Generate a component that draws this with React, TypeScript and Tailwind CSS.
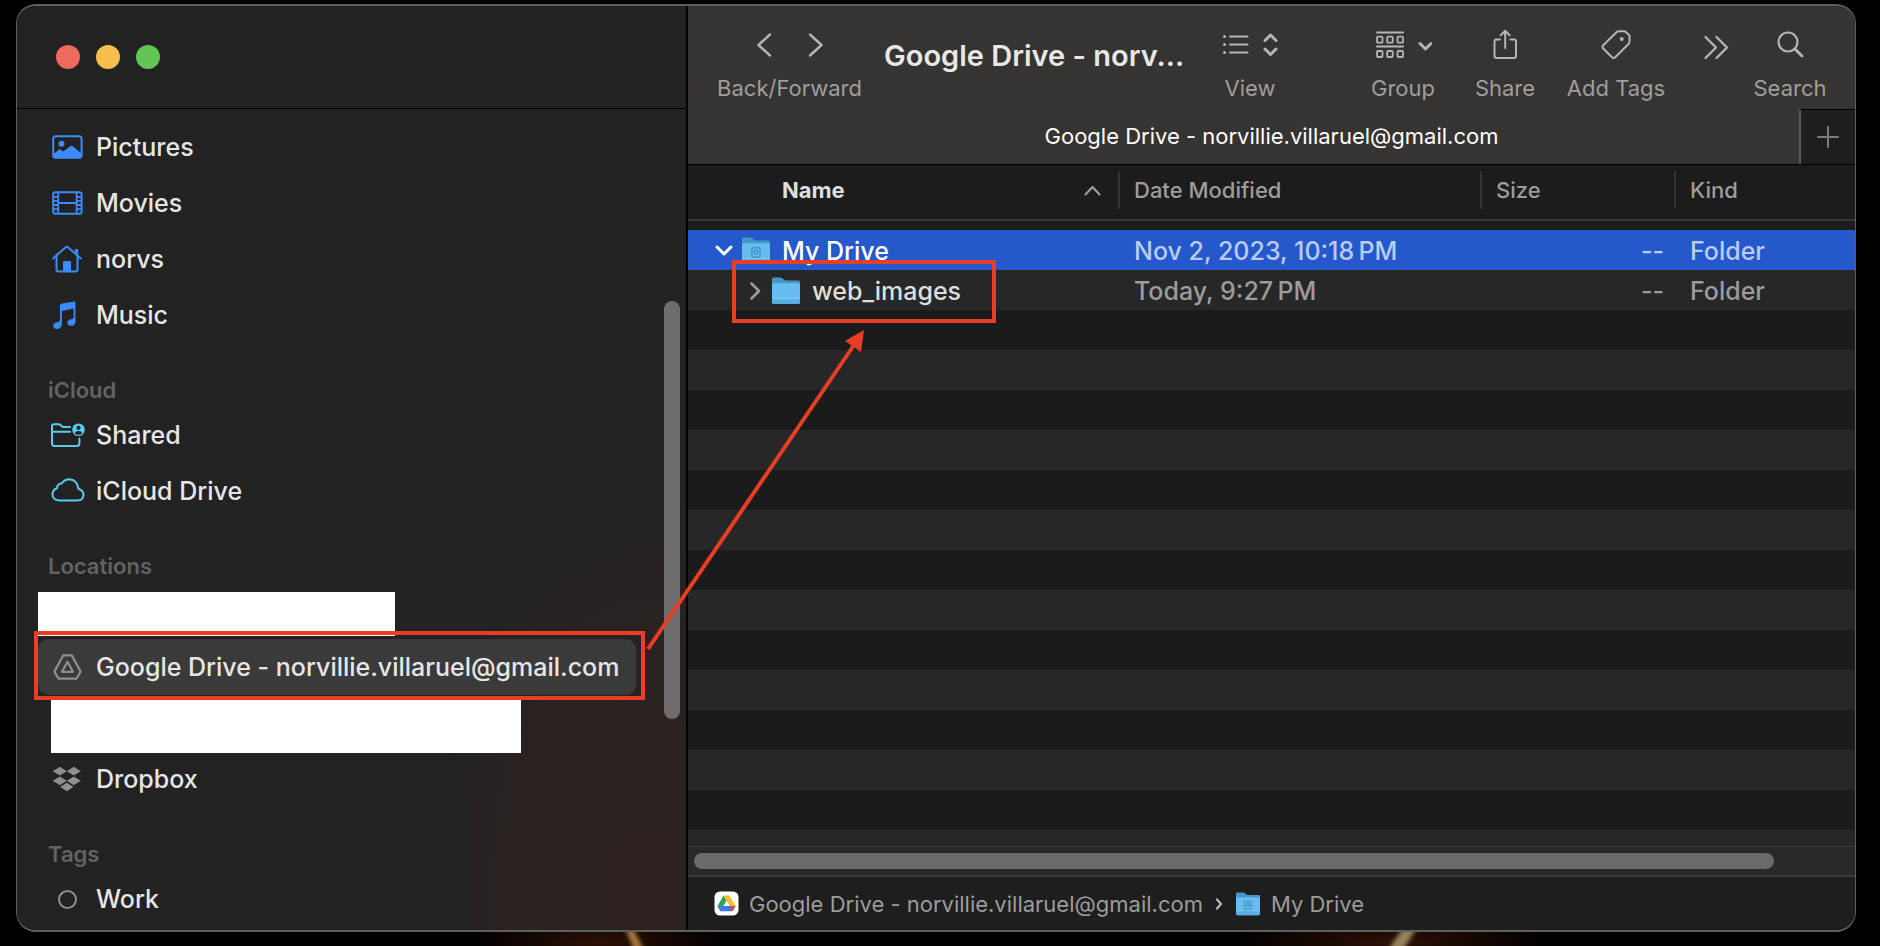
import React from "react";

const rowStripes = Array.from({ length: 14 });

function SideRow({ icon, label, active }: { icon: React.ReactNode; label: string; active?: boolean }) {
  return (
    <li className="h-14">
      <a
        href="#"
        aria-current={active ? "page" : undefined}
        className={`flex h-full items-center rounded-[10px] pl-[14px] ${active ? "bg-[#3b3a3a]" : ""}`}
      >
        <span className="flex w-11 shrink-0 items-center">{icon}</span>
        <span className="whitespace-nowrap">{label}</span>
      </a>
    </li>
  );
}

function SideHeading({ children }: { children: React.ReactNode }) {
  return (
    <h2 className="flex h-16 items-end pb-[3px] pl-[10px] text-[22px] leading-7 font-semibold text-[#636363]">{children}</h2>
  );
}

const blue = "#3b8bff";
const cyan = "#5bcbe8";

const PicturesIcon = () => (
  <svg width="31" height="26" viewBox="0 0 31 26" fill="none">
    <rect x="1.2" y="2.2" width="28.4" height="21.6" rx="2.5" stroke={blue} strokeWidth="2" />
    <circle cx="9.5" cy="9.8" r="3" fill={blue} />
    <path d="M1.5 20 7 15.400Q7.800 14.800 8.600 15.400L11 17.600 18.600 12Q19.600 11.300 20.600 12L29.500 19.600V22Q29 24 27 24H4Q2 24 1.5 22Z" fill={blue} />
  </svg>
);
const MoviesIcon = () => (
  <svg width="31" height="26" viewBox="0 0 31 26" fill="none" stroke={blue}>
    <rect x="1.2" y="2.2" width="28.4" height="21.6" rx="2" strokeWidth="2" />
    <path d="M6.2 3V23M24.600 3V23M6.5 13H24.3" strokeWidth="1.800" />
    <path d="M1 6.8H6M1 10.8H6M1 15H6M1 19.2H6M25 6.8H30M25 10.8H30M25 15H30M25 19.2H30" strokeWidth="1.800" />
  </svg>
);
const HomeIcon = () => (
  <svg width="31" height="28" viewBox="0 0 31 28" fill="none" stroke={blue} strokeWidth="2" strokeLinecap="round" strokeLinejoin="round">
    <path d="M1 13.400 14 2Q14.800 1.300 15.600 2L28.800 13.400" />
    <path d="M4.500 11V24.5Q4.500 26.5 6.500 26.5H23.500Q25.500 26.5 25.500 24.5V11" />
    <path d="M24.5 9.5V4" strokeWidth="3.4" strokeLinecap="butt" />
    <path d="M12 26V17H18V26Z" fill={blue} />
  </svg>
);
const MusicIcon = () => (
  <svg width="28" height="28" viewBox="0 0 28 28" fill={blue}>
    <path d="M8 4.200Q8 3 9.200 2.800L22 .4Q23.400.2 23.400 1.600V20Q23.400 24.600 19.200 24.800Q15.400 24.800 15.400 21.600Q15.600 18.900 19 18.300Q21.600 17.800 21.600 16.400V7.600L9.900 9.900V22.600Q9.900 27.600 5.200 28Q1.200 28 1.200 24.600Q1.600 21.800 5 21.200Q8 20.700 8 19.200Z" />
  </svg>
);
const SharedIcon = () => (
  <svg width="35" height="26" viewBox="0 0 35 26" fill="none" stroke={cyan} strokeWidth="2" strokeLinecap="round" className="-ml-px">
    <path d="M19 5H12.5Q11.5 5 10.5 4L9.8 3.3Q8.8 2.2 7.4 2.2H3Q1 2.2 1 4.2V21.6Q1 24 3.4 24H26Q28.4 24 28.4 21.6V16.5" />
    <path d="M1.5 9.8H19" />
    <circle cx="27.5" cy="7.8" r="6.3" fill={cyan} stroke="none" />
    <circle cx="27.5" cy="5.8" r="2.1" fill="#222" stroke="none" />
    <path d="M23.5 11.2Q25 8.9 27.5 8.9T31.5 11.2Q29.8 12.8 27.5 12.8T23.5 11.2Z" fill="#222" stroke="none" />
  </svg>
);
const CloudIcon = () => (
  <svg width="34" height="26" viewBox="0 0 34 26" fill="none" stroke={cyan} strokeWidth="2" className="-ml-px">
    <path d="M8 22.500Q1.500 22 1.500 16.500Q1.500 11.800 6 10.300Q6.200 6 10.500 5.600Q13.500 1.200 18.500 1.200Q26.500 2 27.400 10.700Q32.500 12.500 32.500 17Q32 22.500 26.500 22.500Z" strokeLinejoin="round" />
  </svg>
);
const DriveGlyph = () => (
  <svg width="31" height="28" viewBox="0 0 31 28" fill="none" stroke="#8f8f8f" strokeWidth="2.2" strokeLinejoin="round">
    <path d="M11.3 2.3H19.7L28.6 18.6 24.4 25.7H6.6L2.4 18.6Z" />
    <path d="M15.5 8.8 21 18.8H10Z" />
  </svg>
);
const DropboxGlyph = () => (
  <svg width="30" height="26" viewBox="0 0 30 26" fill="#8f8f8f">
    <path d="M7.8.8 14.8 5.2 7.8 9.6.8 5.2ZM21.8.8 28.8 5.2 21.8 9.6 14.8 5.2ZM7.8 10.4 14.8 14.8 7.8 19.2.8 14.8ZM21.8 10.4 28.8 14.8 21.8 19.2 14.8 14.8ZM14.8 16.8 21.4 20.9 14.8 25.2 8.2 20.9Z" />
  </svg>
);

function Folder({ badge, small }: { badge?: boolean; small?: boolean }) {
  return (
    <svg width={small ? 26 : 30} height={small ? 24 : 28} viewBox="0 0 30 28" aria-hidden="true">
      <path d="M1 2.2Q1 .6 2.8.6H9.4Q10.6.6 11.4 1.4L12.8 2.6Q13.6 3.4 14.8 3.4H27.2Q29 3.4 29 5V12H1Z" fill="#4597c8" />
      <path d="M1 7.6Q1 6.2 2.6 6.2H27.4Q29 6.2 29 7.6V25Q29 27 27 27H3Q1 27 1 25Z" fill="#68bdf0" />
      <path d="M1 22V25Q1 27 3 27H27Q29 27 29 25V22Z" fill="#57afe4" />
      <path d="M1 21.5H29" stroke="#8acdf5" strokeWidth=".8" />
      {badge && (
        <g fill="none" stroke="#3d8fc0" strokeWidth="1.3">
          <rect x="11" y="10.8" width="8" height="9.4" rx="1.2" />
          <circle cx="15" cy="15.2" r="1.8" />
        </g>
      )}
    </svg>
  );
}

function Tool({ label, className, children }: { label: string; className: string; children: React.ReactNode }) {
  return (
    <button type="button" className={`flex flex-col items-center ${className}`}>
      <span className="flex h-[34px] items-center justify-center">{children}</span>
      <span className="mt-3 text-[22px] leading-7 whitespace-nowrap">{label}</span>
    </button>
  );
}

const line = { fill: "none", stroke: "#b5b5b4", strokeLinecap: "round", strokeLinejoin: "round" } as const;

export default function App() {
  return (
    <div
      className="relative min-h-screen bg-black pt-1 pr-6 pb-[14px] pl-4 text-[#e6e6e6]"
      style={{ fontFamily: 'Inter, "Liberation Sans", sans-serif' }}
    >
      <svg className="absolute bottom-0 left-0 h-[14px] w-full" viewBox="0 0 1880 14" preserveAspectRatio="none" aria-hidden="true">
        <defs>
          <radialGradient id="glow">
            <stop offset="0" stopColor="#2c1006" />
            <stop offset="1" stopColor="#000" />
          </radialGradient>
          <filter id="soft" x="-50%" y="-50%" width="200%" height="200%">
            <feGaussianBlur stdDeviation="2" />
          </filter>
        </defs>
        <ellipse cx="600" cy="10" rx="130" ry="30" fill="url(#glow)" />
        <ellipse cx="1390" cy="10" rx="160" ry="30" fill="url(#glow)" />
        <path d="M625 -4H633L644 18H634Z" fill="#a8743c" filter="url(#soft)" />
        <path d="M1403 -4H1417L1403 18H1388Z" fill="#94805a" filter="url(#soft)" />
      </svg>

      <div className="relative flex h-[calc(100vh-18px)] min-h-[900px] overflow-hidden rounded-[20px] border border-t-2 border-b-2 border-[#5f5f5f] bg-[#1c1c1c]">
        <aside className="flex w-[671px] shrink-0 flex-col border-r-2 border-black bg-[#222] bg-[radial-gradient(ellipse_220px_420px_at_94%_96%,#2e2221_0%,#292221_60%,#222222_100%)]">
          <div className="flex h-[103px] shrink-0 items-center gap-4 border-b border-black pb-px pl-[39px]">
            <button type="button" aria-label="Close" className="size-6 rounded-full bg-[#ed6a5e]" />
            <button type="button" aria-label="Minimize" className="size-6 rounded-full bg-[#f5bf4f]" />
            <button type="button" aria-label="Zoom" className="size-6 rounded-full bg-[#61c554]" />
          </div>
          <div className="flex min-h-0 grow">
            <nav className="w-[619px] pt-[10px] pl-[21px] text-[25px] leading-8 font-medium">
              <ul>
                <SideRow icon={<PicturesIcon />} label="Pictures" />
                <SideRow icon={<MoviesIcon />} label="Movies" />
                <SideRow icon={<HomeIcon />} label="norvs" />
                <SideRow icon={<MusicIcon />} label="Music" />
              </ul>
              <SideHeading>iCloud</SideHeading>
              <ul>
                <SideRow icon={<SharedIcon />} label="Shared" />
                <SideRow icon={<CloudIcon />} label="iCloud Drive" />
              </ul>
              <SideHeading>Locations</SideHeading>
              <ul>
                <li className="h-14 pt-[9px]">
                  <div className="h-11 w-[357px] bg-white" />
                </li>
                <SideRow active icon={<DriveGlyph />} label="Google Drive - norvillie.villaruel@gmail.com" />
                <li className="flex h-14 pt-1 pl-[13px]">
                  <div className="h-[54px] w-[470px] bg-white" />
                </li>
                <SideRow icon={<DropboxGlyph />} label="Dropbox" />
              </ul>
              <SideHeading>Tags</SideHeading>
              <ul>
                <SideRow icon={<span className="ml-[6px] size-[19px] rounded-full border-2 border-[#8f8f8f]" />} label="Work" />
              </ul>
            </nav>
            <div className="ml-auto pt-[192px] pr-[6px]">
              <div className="h-[418px] w-4 rounded-full bg-[#6e6c6c]" />
            </div>
          </div>
        </aside>

        <main className="flex min-w-0 grow flex-col">
          <header className="flex h-[103px] shrink-0 items-start bg-[#353432] pt-[22px] text-[#9f9e9d]">
            <div className="ml-[30px] flex w-[143px] flex-col items-center">
              <div className="flex h-[34px] items-center gap-9">
                <button type="button" aria-label="Back">
                  <svg width="15" height="24" viewBox="0 0 15 24" {...line} strokeWidth="2.4"><path d="M13 1.5 1.500 12 13 22.5" /></svg>
                </button>
                <button type="button" aria-label="Forward">
                  <svg width="15" height="24" viewBox="0 0 15 24" {...line} strokeWidth="2.4"><path d="M2 1.5 13.500 12 2 22.5" /></svg>
                </button>
              </div>
              <span className="mt-3 text-[22px] leading-7 whitespace-nowrap">Back/Forward</span>
            </div>
            <h1 className="mt-2 ml-[23px] text-[29px] leading-10 font-semibold whitespace-nowrap text-[#e8e8e7]">
              Google Drive - norv...
            </h1>
            <Tool label="View" className="ml-auto w-[60px]">
              <svg width="58" height="28" viewBox="0 0 58 28" {...line} strokeWidth="2">
                <path d="M9 5.5H26.500M9 13.500H26.500M9 21.5H26.500" />
                <path d="M3.500 5.5h.1M3.500 13.500h.1M3.500 21.5h.1" strokeWidth="3" />
                <path d="M44 9.500 49.5 4 55 9.500M44 18 49.5 23.500 55 18" strokeWidth="3" />
              </svg>
            </Tool>
            <Tool label="Group" className="ml-[91px] w-16">
              <svg width="58" height="30" viewBox="0 0 58 30" {...line} strokeWidth="2">
                <path d="M3 2.500H29M3 16.500H29" />
                <g strokeWidth="1.8">
                  <rect x="3" y="6.700" width="5.500" height="6" rx="1" />
                  <rect x="13.200" y="6.700" width="5.500" height="6" rx="1" />
                  <rect x="23.500" y="6.700" width="5.500" height="6" rx="1" />
                  <rect x="3" y="21" width="5.500" height="6" rx="1" />
                  <rect x="13.200" y="21" width="5.500" height="6" rx="1" />
                  <rect x="23.500" y="21" width="5.500" height="6" rx="1" />
                </g>
                <path d="M46 13.500 51.500 19 57 13.500" strokeWidth="3" />
              </svg>
            </Tool>
            <Tool label="Share" className="ml-10 w-[60px]">
              <svg width="26" height="32" viewBox="0 0 26 32" {...line} strokeWidth="2">
                <path d="M8 10.500H4.500Q2.500 10.500 2.500 12.500V27Q2.500 29 4.500 29H22Q24 29 24 27V12.500Q24 10.500 22 10.500H18.500M13.200 19V2M8.700 6.200 13.200 1.800 17.700 6.200" />
              </svg>
            </Tool>
            <Tool label="Add Tags" className="ml-8 w-[98px]">
              <svg width="30" height="32" viewBox="0 0 30 32" {...line} strokeWidth="2">
                <path d="M15.500 3.300Q16.500 2.300 18 2.300H24L28.500 6.500V12.500Q28.500 14 27.500 15L14.500 28Q12.800 29.800 11 28.200L2.200 19.500Q.8 17.800 2.200 16.200Z" />
                <circle cx="20.700" cy="10" r="1" fill="#b5b5b4" />
              </svg>
            </Tool>
            <button type="button" aria-label="More" className="ml-[38px] flex h-[38px] items-center">
              <svg width="26" height="26" viewBox="0 0 26 26" {...line} strokeWidth="2.300"><path d="M2.500 3 13 13.500 2.500 24M13.500 3 24 13.500 13.500 24" /></svg>
            </button>
            <Tool label="Search" className="mr-[29px] ml-[25px] w-[72px]">
              <svg width="28" height="30" viewBox="0 0 28 30" {...line} strokeWidth="2.200"><circle cx="12" cy="12" r="9.500" /><path d="M19 19 26 26" strokeWidth="2.800" /></svg>
            </Tool>
          </header>

          <div className="flex h-14 shrink-0 border-b border-black bg-[#353432]">
            <div className="flex grow items-center justify-center pb-px pl-14 text-[22px] leading-7 text-white">
              Google Drive - norvillie.villaruel@gmail.com
            </div>
            <button type="button" aria-label="New tab" className="flex w-14 items-center justify-center border-t border-l-2 border-t-black border-l-[#5a5a58] bg-[#1f1e1d]">
              <svg width="22" height="22" viewBox="0 0 22 22" {...line} stroke="#7b7b7a" strokeWidth="2"><path d="M11 1V21M1 11H21" /></svg>
            </button>
          </div>

          <div className="min-h-0 grow overflow-hidden">
            <table className="w-full table-fixed border-collapse text-left whitespace-nowrap">
              <colgroup>
                <col className="w-[432px]" />
                <col className="w-[362px]" />
                <col className="w-[194px]" />
                <col />
              </colgroup>
              <thead className="text-[22px] leading-7 text-[#9c9c9c]">
                <tr className="h-[55px] border-b-2 border-[#363636]">
                  <th scope="col" className="p-0 font-bold text-[#dedede]">
                    <div className="mb-1 flex h-[38px] items-center justify-between border-r-2 border-[#343434] pr-[17px] pl-[94px]">
                      Name
                      <svg width="17" height="11" viewBox="0 0 17 11" {...line} stroke="#a0a0a0" strokeWidth="2"><path d="M1.500 9.500 8.500 2 15.500 9.500" /></svg>
                    </div>
                  </th>
                  <th scope="col" className="p-0 font-medium">
                    <div className="mb-1 flex h-[38px] items-center border-r-2 border-[#343434] pl-[14px]">Date Modified</div>
                  </th>
                  <th scope="col" className="p-0 font-medium">
                    <div className="mb-1 flex h-[38px] items-center border-r-2 border-[#343434] pl-[14px]">Size</div>
                  </th>
                  <th scope="col" className="p-0 font-medium">
                    <div className="mb-1 flex h-[38px] items-center pl-[14px]">Kind</div>
                  </th>
                </tr>
              </thead>
              <tbody className="text-[25px] leading-8 font-medium text-[#9c9c9c]">
                <tr className="h-[10px]" aria-hidden="true"><td colSpan={4} className="p-0" /></tr>
                <tr className="h-10 bg-[#2458cb] text-[#bccbf0]">
                  <td className="p-0 pt-[2px]">
                    <div className="flex items-center pl-[27px] text-white">
                      <svg width="18" height="14" viewBox="0 0 18 14" {...line} stroke="#fff" strokeWidth="3"><path d="M2 3 9 10 16 3" /></svg>
                      <span className="ml-2 flex w-[41px]"><Folder badge /></span>
                      My Drive
                    </div>
                  </td>
                  <td className="p-0 pt-[2px] pl-[14px]">Nov 2, 2023, 10:18{"\u2009"}PM</td>
                  <td className="p-0 pt-[2px] pr-3 text-right">--</td>
                  <td className="p-0 pt-[2px] pl-[14px]">Folder</td>
                </tr>
                <tr className="h-10 bg-[#272727]">
                  <td className="p-0 pt-[2px]">
                    <div className="flex items-center pl-[61px] text-[#dedede]">
                      <svg width="14" height="18" viewBox="0 0 14 18" {...line} stroke="#9c9c9c" strokeWidth="2.600"><path d="M2.500 1.500 10 9 2.500 16.500" /></svg>
                      <span className="ml-2 flex w-[41px]"><Folder /></span>
                      web_images
                    </div>
                  </td>
                  <td className="p-0 pt-[2px] pl-[14px]">Today, 9:27{"\u2009"}PM</td>
                  <td className="p-0 pt-[2px] pr-3 text-right">--</td>
                  <td className="p-0 pt-[2px] pl-[14px]">Folder</td>
                </tr>
                {rowStripes.map((_, i) => (
                  <tr key={i} aria-hidden="true" className="h-10 odd:bg-[#272727] even:bg-[#1b1b1b]">
                    <td colSpan={4} className="p-0" />
                  </tr>
                ))}
              </tbody>
            </table>
          </div>

          <div className="flex h-[31px] shrink-0 items-center border-t border-b-2 border-[#3b3b3b] bg-[#292929] pl-[6px]">
            <div className="h-4 w-[93%] rounded-full bg-[#6a6a6a]" />
          </div>

          <footer className="flex h-[53px] shrink-0 items-center bg-[#1e1e1e] pl-[26px] text-[22px] leading-7 text-[#9c9c9c]">
            <svg width="25" height="25" viewBox="0 0 25 25" aria-hidden="true">
              <rect x=".5" y=".5" width="24" height="24" rx="5.500" fill="#fff" />
              <path d="M9.500 4.500 12.500 9.700 6.500 20.200 3.500 15Z" fill="#2fa35a" />
              <path d="M9.500 4.500H15.500L21.500 15H15.500Z" fill="#fbbc2c" />
              <path d="M3.500 15H21.500L18.500 20.200H6.500Z" fill="#3c78e8" />
              <path d="M15.500 15H21.500L18.500 20.200Z" fill="#e3483a" />
              <path d="M12.500 9.700 9.500 15H15.500Z" fill="#fff" />
            </svg>
            <span className="ml-[10px]">Google Drive - norvillie.villaruel@gmail.com</span>
            <svg className="mx-3" width="8" height="14" viewBox="0 0 8 14" {...line} strokeWidth="2.400"><path d="M2 2.500 6 7 2 11.500" /></svg>
            <Folder badge small />
            <span className="ml-[10px]">My Drive</span>
          </footer>
        </main>
      </div>

      <div className="pointer-events-none absolute top-[631px] left-[34px] h-[69px] w-[611px] border-4 border-[#e93e25]" />
      <div className="pointer-events-none absolute top-[260px] left-[732px] h-[63px] w-[264px] border-4 border-[#e93e25]" />
      <svg className="pointer-events-none absolute top-[320px] left-[640px]" width="240" height="335" viewBox="640 320 240 335" aria-hidden="true">
        <path d="M648 649 856 342" stroke="#e93e25" strokeWidth="4" />
        <path d="M864 330 861 352 845 341Z" fill="#e93e25" />
      </svg>
    </div>
  );
}
